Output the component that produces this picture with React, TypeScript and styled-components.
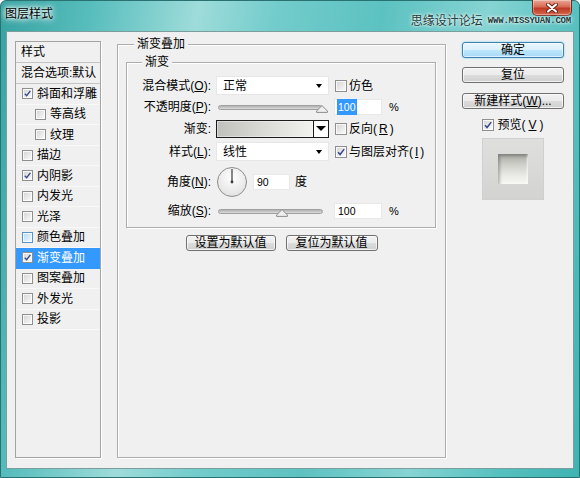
import React from 'react';
import styled, { createGlobalStyle } from 'styled-components';

type Effect = {
  label: string;
  checked?: boolean;
  indent?: boolean;
  hover?: boolean;
  selected?: boolean;
};

const effects: Effect[] = [
  { label: '斜面和浮雕', checked: true },
  { label: '等高线', indent: true },
  { label: '纹理', indent: true },
  { label: '描边' },
  { label: '内阴影', checked: true },
  { label: '内发光' },
  { label: '光泽' },
  { label: '颜色叠加', hover: true },
  { label: '渐变叠加', checked: true, selected: true },
  { label: '图案叠加' },
  { label: '外发光' },
  { label: '投影' },
];

const Check = ({ checked, hover, size = 12 }: { checked?: boolean; hover?: boolean; size?: number }) => (
  <CheckBox $size={size} $hover={hover}>
    {checked && (
      <svg viewBox="0 0 12 12" width={size - 2} height={size - 2}>
        <path d="M2.4 6.3 L4.9 9 L9.8 2.6" fill="none" stroke="#34488a" strokeWidth="1.8" />
      </svg>
    )}
  </CheckBox>
);

const Slider = ({ value }: { value: number }) => (
  <Track>
    <Thumb viewBox="0 0 12 8" style={{ left: `${value}%` }}>
      <path d="M6 0.6 L11.4 6 L11.4 7.4 L0.6 7.4 L0.6 6 Z" fill="#efefef" stroke="#8b8b8b" />
    </Thumb>
  </Track>
);

const AngleDial = ({ angle }: { angle: number }) => {
  const rad = (angle * Math.PI) / 180;
  const x = 16 + Math.cos(rad) * 13;
  const y = 16 - Math.sin(rad) * 13;
  return (
    <svg width="32" height="32" viewBox="0 0 32 32">
      <defs>
        <radialGradient id="dialFill" cx="50%" cy="35%" r="65%">
          <stop offset="0%" stopColor="#ffffff" />
          <stop offset="100%" stopColor="#e2e2e2" />
        </radialGradient>
      </defs>
      <circle cx="16" cy="16" r="14.5" fill="url(#dialFill)" stroke="#8d8d8d" />
      <line x1="16" y1="16" x2={x} y2={y} stroke="#3a3a3a" strokeWidth="1.2" />
      <circle cx="16" cy="16" r="1.4" fill="#3a3a3a" />
    </svg>
  );
};

const CloseGlyph = () => (
  <svg width="14" height="10" viewBox="0 0 14 10">
    <path d="M3 1.5 L11 8.5 M11 1.5 L3 8.5" stroke="#6b1d12" strokeWidth="4" strokeLinecap="round" />
    <path d="M3 1.5 L11 8.5 M11 1.5 L3 8.5" stroke="#ffffff" strokeWidth="2.2" strokeLinecap="round" />
  </svg>
);

export default function App() {
  return (
    <>
      <GlobalStyle />
      <Window>
        <TitleBar>
          <Caption>图层样式</Caption>
          <Watermark>
            <WatermarkCn>思缘设计论坛</WatermarkCn>
            <WatermarkUrl>WWW.MISSYUAN.COM</WatermarkUrl>
          </Watermark>
          <CloseButton>
            <CloseGlyph />
          </CloseButton>
        </TitleBar>

        <Client>
          <StyleList>
            <ListHeader>样式</ListHeader>
            <ListHeader>混合选项:默认</ListHeader>
            {effects.map((e) => (
              <EffectRow key={e.label} $indent={e.indent} $selected={e.selected}>
                <Check size={11} checked={e.checked} hover={e.hover} />
                {e.label}
              </EffectRow>
            ))}
          </StyleList>

          <MainGroup>
            <GroupTitle $left={16}>渐变叠加</GroupTitle>
            <InnerGroup>
              <GroupTitle $left={15}>渐变</GroupTitle>
              <FormGrid>
                <Label>混合模式(<U>O</U>):</Label>
                <Select>
                  正常
                  <SmallArrow />
                </Select>
                <CheckLabel>
                  <Check />
                  仿色
                </CheckLabel>

                <Label>不透明度(<U>P</U>):</Label>
                <Slider value={100} />
                <Inline>
                  <NumInput $w={48}>
                    <Selected>100</Selected>
                  </NumInput>
                  <Unit>%</Unit>
                </Inline>

                <Label>渐变:</Label>
                <GradientPicker>
                  <GradientSwatch />
                  <GradientArrow>
                    <BigArrow />
                  </GradientArrow>
                </GradientPicker>
                <CheckLabel>
                  <Check />
                  反向(<U>R</U>)
                </CheckLabel>

                <Label>样式(<U>L</U>):</Label>
                <Select>
                  线性
                  <SmallArrow />
                </Select>
                <CheckLabel>
                  <Check checked />
                  与图层对齐(<U>I</U>)
                </CheckLabel>

                <Label>角度(<U>N</U>):</Label>
                <AngleRow>
                  <AngleDial angle={90} />
                  <NumInput $w={37}>90</NumInput>
                  <span>度</span>
                </AngleRow>
                <span />

                <Label>缩放(<U>S</U>):</Label>
                <Slider value={61} />
                <Inline>
                  <NumInput $w={48}>100</NumInput>
                  <Unit>%</Unit>
                </Inline>
              </FormGrid>
            </InnerGroup>
            <ButtonRow>
              <Button $w={90}>设置为默认值</Button>
              <Button $w={92}>复位为默认值</Button>
            </ButtonRow>
          </MainGroup>

          <Side>
            <Button $primary>确定</Button>
            <Button $gap={9}>复位</Button>
            <Button $gap={10}>
              新建样式(<U>W</U>)...
            </Button>
            <PreviewToggle>
              <Check checked />
              预览(<U>V</U>)
            </PreviewToggle>
            <PreviewBox>
              <PreviewSwatch />
            </PreviewBox>
          </Side>
        </Client>
      </Window>
    </>
  );
}

const GlobalStyle = createGlobalStyle`
  html, body {
    margin: 0;
    padding: 0;
    width: 580px;
    height: 478px;
    overflow: hidden;
    background: #ffffff;
  }
  body {
    font-family: "Liberation Sans", "Noto Sans CJK SC", sans-serif;
    font-size: 12px;
    line-height: 16px;
    color: #000;
  }
`;

const Window = styled.div`
  box-sizing: border-box;
  width: 580px;
  height: 478px;
  display: flex;
  flex-direction: column;
  border: 1px solid #2a7172;
  border-radius: 6px 6px 0 0;
  background: linear-gradient(100deg, #36a3a2 0%, #58bebd 14%, #9edcda 30%, #72cccb 42%, #5cc2c1 58%, #86d4d3 74%, #55c0bf 88%, #3fb3b3 100%);
`;

const TitleBar = styled.div`
  position: relative;
  flex: none;
  height: 30px;
  display: flex;
  align-items: flex-start;
  padding: 0 8px 0 4px;
`;

const Caption = styled.span`
  margin-top: 5px;
  font-size: 12px;
  text-shadow: 0 0 3px #fff, 0 0 6px #fff, 0 0 9px #fff;
`;

const Watermark = styled.div`
  position: relative;
  z-index: 1;
  margin: 10px 0 0 auto;
  display: flex;
  align-items: center;
  gap: 5px;
  color: #223b3c;
  text-shadow: 0 0 2px #fff, 0 0 4px #fff;
`;

const WatermarkCn = styled.span`
  font-family: "Noto Sans CJK SC", sans-serif;
  font-size: 12px;
`;

const WatermarkUrl = styled.span`
  font-family: "Liberation Mono", monospace;
  font-weight: bold;
  font-size: 9px;
  letter-spacing: -0.2px;
  margin-top: 2px;
`;

const CloseButton = styled.div`
  position: absolute;
  top: -1px;
  right: 7px;
  width: 40px;
  height: 16px;
  box-sizing: border-box;
  display: flex;
  align-items: center;
  justify-content: center;
  border: 1px solid #70291e;
  border-top: none;
  border-radius: 0 0 5px 5px;
  background: linear-gradient(#eaa796 0%, #d66a55 45%, #bd3a24 55%, #d8654c 100%);
  box-shadow: inset 0 0 0 1px rgba(255, 255, 255, 0.35);
`;

const Client = styled.div`
  box-sizing: border-box;
  flex: 1;
  margin: 0 5px 8px 5px;
  border: 1px solid #7c9d9d;
  background: #f0f0f0;
  display: flex;
  align-items: flex-start;
  padding: 0 9px 0 8px;
`;

const StyleList = styled.div`
  box-sizing: border-box;
  flex: none;
  width: 86px;
  height: 417px;
  margin-top: 9px;
  border: 1px solid #a3a3a3;
  box-shadow: 1px 1px 0 #ffffff;
  background: #f0f0f0;
  display: flex;
  flex-direction: column;
`;

const ListHeader = styled.div`
  box-sizing: border-box;
  height: 21px;
  padding-left: 5px;
  display: flex;
  align-items: center;
  border-bottom: 1px solid #c4c4c4;
  white-space: nowrap;
  overflow: hidden;
`;

const EffectRow = styled.div<{ $indent?: boolean; $selected?: boolean }>`
  box-sizing: border-box;
  height: 20.5px;
  display: flex;
  align-items: center;
  gap: 4px;
  padding-left: ${(p) => (p.$indent ? 19 : 6)}px;
  border-bottom: 1px solid ${(p) => (p.$selected ? '#3399ff' : '#f8f8f8')};
  background: ${(p) => (p.$selected ? '#3399ff' : 'transparent')};
  color: ${(p) => (p.$selected ? '#ffffff' : '#000000')};
  white-space: nowrap;
`;

const CheckBox = styled.span<{ $size: number; $hover?: boolean }>`
  box-sizing: border-box;
  flex: none;
  width: ${(p) => p.$size}px;
  height: ${(p) => p.$size}px;
  display: inline-flex;
  align-items: center;
  justify-content: center;
  border: 1px solid ${(p) => (p.$hover ? '#5b93c4' : '#8e8f8f')};
  background: ${(p) =>
    p.$hover
      ? 'linear-gradient(135deg, #b4dcf7, #e7f5fe 85%)'
      : 'linear-gradient(135deg, #d3d3d3, #f6f6f6 85%)'};
  box-shadow: inset 0 0 0 1px rgba(255, 255, 255, 0.8);
`;

const MainGroup = styled.div`
  box-sizing: border-box;
  flex: none;
  width: 329px;
  height: 414px;
  margin: 12px 0 0 16px;
  border: 1px solid #adadad;
  box-shadow: inset 1px 1px 0 #ffffff, 1px 1px 0 #ffffff;
  display: flex;
  flex-direction: column;
`;

const GroupTitle = styled.div<{ $left: number }>`
  align-self: flex-start;
  margin: -9px 0 0 ${(p) => p.$left}px;
  padding: 0 3px;
  background: #f0f0f0;
  line-height: 16px;
`;

const InnerGroup = styled.div`
  box-sizing: border-box;
  margin: 10px 9px 0 8px;
  border: 1px solid #adadad;
  box-shadow: inset 1px 1px 0 #ffffff, 1px 1px 0 #ffffff;
  padding-bottom: 5px;
  display: flex;
  flex-direction: column;
`;

const FormGrid = styled.div`
  margin-top: 5px;
  display: grid;
  grid-template-columns: 84px 113px auto;
  grid-template-rows: 21px 22px 21px 25px 36px 22px;
  column-gap: 5px;
  align-items: center;
`;

const Label = styled.span`
  justify-self: end;
  white-space: nowrap;
`;

const U = styled.span`
  text-decoration: underline;
  text-underline-offset: 1px;
`;

const Select = styled.div`
  box-sizing: border-box;
  width: 113px;
  height: 19px;
  display: flex;
  align-items: center;
  justify-content: space-between;
  padding: 0 6px 0 6px;
  background: #ffffff;
  border: 1px solid #e6e6e6;
`;

const SmallArrow = styled.span`
  width: 0;
  height: 0;
  border-left: 3.5px solid transparent;
  border-right: 3.5px solid transparent;
  border-top: 4px solid #000000;
`;

const BigArrow = styled.span`
  width: 0;
  height: 0;
  border-left: 5px solid transparent;
  border-right: 5px solid transparent;
  border-top: 5px solid #000000;
`;

const CheckLabel = styled.span`
  display: flex;
  align-items: center;
  gap: 2px;
  margin-left: 1px;
  white-space: nowrap;
`;

const Track = styled.div`
  position: relative;
  box-sizing: border-box;
  width: 105px;
  height: 5px;
  margin-left: 2px;
  border: 1px solid #a0a0a0;
  border-radius: 3px;
  background: linear-gradient(#b0b0b0, #dcdcdc);
`;

const Thumb = styled.svg`
  position: absolute;
  top: -1px;
  width: 12px;
  height: 8px;
  margin-left: -6px;
`;

const Inline = styled.div`
  display: flex;
  align-items: center;
  gap: 7px;
`;

const NumInput = styled.div<{ $w: number }>`
  box-sizing: border-box;
  width: ${(p) => p.$w}px;
  height: 16px;
  display: flex;
  align-items: center;
  padding-left: 3px;
  background: #ffffff;
  border: 1px solid #e8e8e8;
  font-family: "Liberation Sans", sans-serif;
  font-size: 10.5px;
`;

const Selected = styled.span`
  background: #3399ff;
  color: #ffffff;
  padding: 0 1px;
  margin-left: -1px;
`;

const Unit = styled.span`
  font-family: "Liberation Sans", sans-serif;
  font-size: 11px;
`;

const GradientPicker = styled.div`
  box-sizing: border-box;
  width: 113px;
  height: 18px;
  display: flex;
  border: 1px solid #1c1c1c;
`;

const GradientSwatch = styled.div`
  flex: 1;
  border-right: 1px solid #1c1c1c;
  background: linear-gradient(to right, #c0c0bc, #d8d8d4 45%, #f2f2ee);
  box-shadow: inset 0 0 0 1px rgba(255, 255, 255, 0.4);
`;

const GradientArrow = styled.div`
  width: 14px;
  display: flex;
  align-items: center;
  justify-content: center;
  background: #ffffff;
`;

const AngleRow = styled.div`
  display: flex;
  align-items: center;
  gap: 5px;
  white-space: nowrap;
`;

const ButtonRow = styled.div`
  margin-top: 7px;
  display: flex;
  justify-content: center;
  gap: 10px;
`;

const Button = styled.button<{ $primary?: boolean; $w?: number; $gap?: number }>`
  box-sizing: border-box;
  width: ${(p) => (p.$w ? `${p.$w}px` : '100%')};
  height: 16px;
  margin-top: ${(p) => p.$gap ?? 0}px;
  padding: 0;
  display: flex;
  align-items: center;
  justify-content: center;
  font-family: "Liberation Sans", "Noto Sans CJK SC", sans-serif;
  font-size: 12px;
  line-height: 14px;
  color: #000000;
  white-space: nowrap;
  border-radius: 3px;
  border: 1px solid ${(p) => (p.$primary ? '#3c7fb1' : '#707070')};
  background: ${(p) =>
    p.$primary
      ? 'linear-gradient(#eaf6fd 0%, #d9f0fc 50%, #bee6fd 50%, #a7d9f5 100%)'
      : 'linear-gradient(#f2f2f2 0%, #ebebeb 50%, #dddddd 50%, #cfcfcf 100%)'};
  box-shadow: ${(p) =>
    p.$primary ? '0 0 2px #5fd0f3, inset 0 0 0 1px rgba(255,255,255,0.6)' : 'inset 0 0 0 1px rgba(255,255,255,0.7)'};
`;

const Side = styled.div`
  flex: none;
  width: 102px;
  margin: 10px 0 0 16px;
  display: flex;
  flex-direction: column;
`;

const PreviewToggle = styled.div`
  margin-top: 8px;
  height: 16px;
  display: flex;
  align-items: center;
  justify-content: center;
  gap: 3px;
`;

const PreviewBox = styled.div`
  box-sizing: border-box;
  align-self: center;
  width: 62px;
  height: 62px;
  margin-top: 5px;
  display: flex;
  align-items: center;
  justify-content: center;
  border: 1px solid #d0d0d0;
  background: linear-gradient(#dfdfdd, #d3d3d1);
`;

const PreviewSwatch = styled.div`
  width: 30px;
  height: 30px;
  background: linear-gradient(#a9a9a3 0%, #cfcfca 35%, #ececE8 75%, #f6f6f2 100%);
  box-shadow: inset 2px 2px 3px rgba(0, 0, 0, 0.25), inset -1px -1px 2px rgba(255, 255, 255, 0.8);
`;
